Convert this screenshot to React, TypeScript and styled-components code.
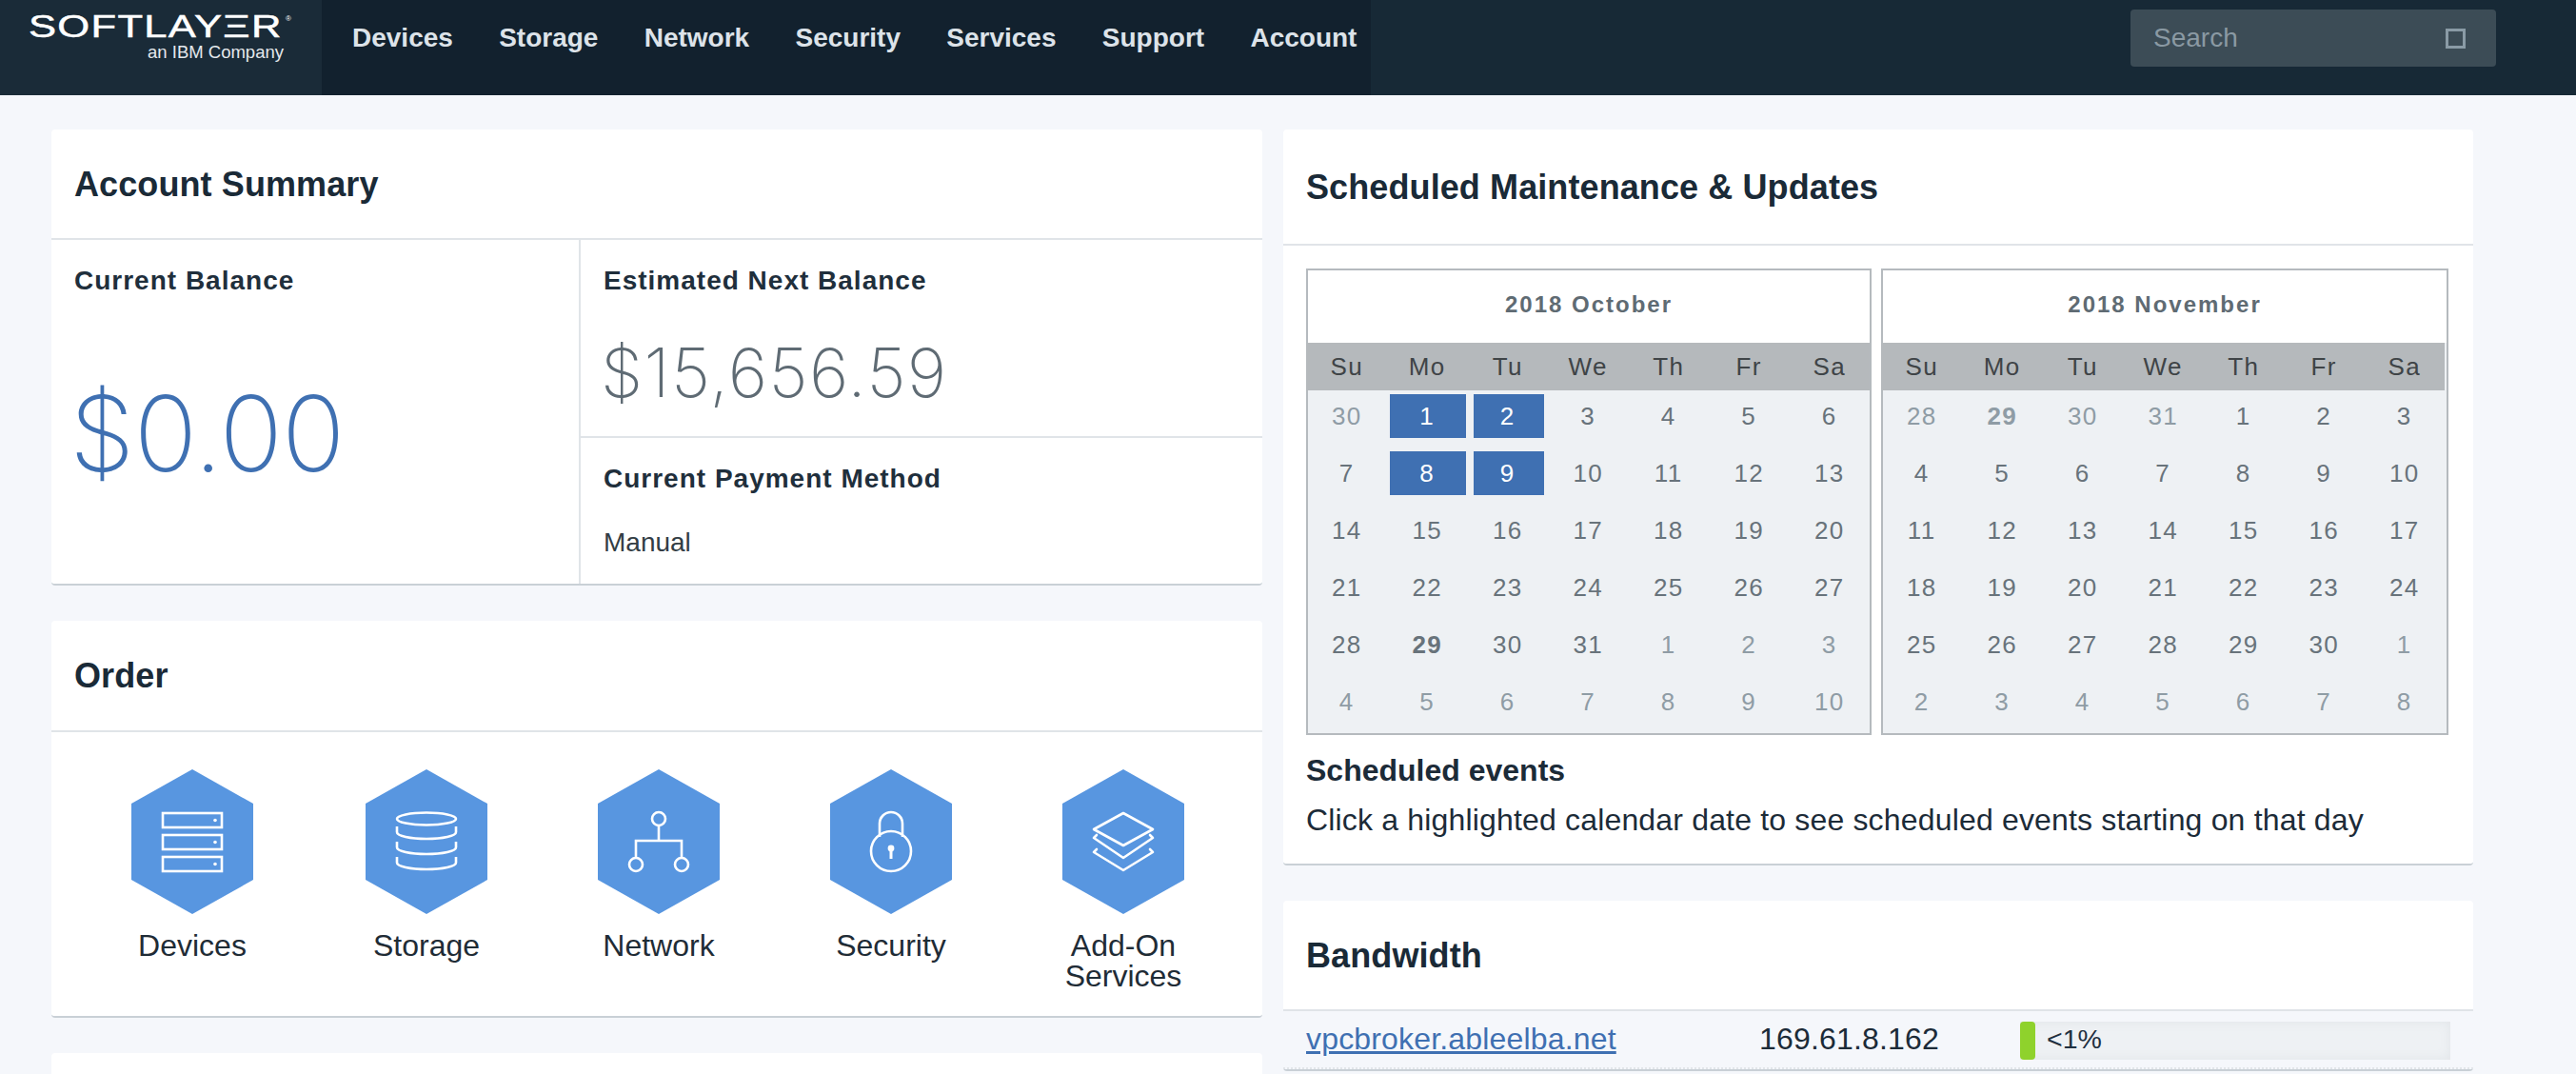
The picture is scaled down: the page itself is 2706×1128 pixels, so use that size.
import React from 'react'
import styled, { createGlobalStyle } from 'styled-components'

const Global = createGlobalStyle`
  html, body { margin: 0; padding: 0; height: 100%; background: #f5f7fb; overflow: hidden; }
  body { font-family: "Liberation Sans", Arial, sans-serif; color: #1c2b38; }
  * { box-sizing: border-box; }
`

const Page = styled.div`
  width: 2706px;
  height: 1128px;
  overflow: hidden;
`

const Header = styled.header`
  display: flex;
  height: 100px;
  background: #172936;
`

const Logo = styled.div`
  width: 338px;
  padding: 11px 0 0 30px;
  background: #1a2b38;
  color: #fff;
`

const LogoMark = styled.div`
  position: relative;
  width: 276px;
  height: 34px;
  font-size: 33.5px;
  line-height: 34px;
  white-space: nowrap;
  -webkit-text-stroke: 0.5px #fff;

  span {
    display: inline-block;
    letter-spacing: 1px;
    transform: scaleX(1.3);
    transform-origin: left center;
  }

  sup {
    position: absolute;
    top: 5px;
    right: 0;
    font-size: 8px;
    line-height: 8px;
    -webkit-text-stroke: 0;
  }
`

const LogoSub = styled.div`
  width: 268px;
  font-size: 18.5px;
  line-height: 20px;
  text-align: right;
  color: #e4e8ec;
`

const Nav = styled.nav`
  display: flex;
  gap: 48.3px;
  width: 1102px;
  padding: 24px 0 0 32px;
  background: #12212e;
`

const NavLink = styled.a`
  font-size: 28px;
  font-weight: 700;
  line-height: 32px;
  color: #dde3e9;
`

const Search = styled.div`
  display: flex;
  align-items: center;
  justify-content: space-between;
  width: 384px;
  height: 60px;
  margin: 10px 0 0 798px;
  padding: 0 32px 0 24px;
  border-radius: 4px;
  background: #3c4c56;
  font-size: 28px;
  color: #8a99a3;
`

const SearchIcon = styled.span`
  width: 21px;
  height: 21px;
  border: 3px solid #8a9ba6;
`

const Main = styled.main`
  display: grid;
  grid-template-columns: 1272px 1250px;
  gap: 22px;
  padding: 36px 0 0 54px;
`

const Column = styled.div`
  display: flex;
  flex-direction: column;
  gap: 37px;
`

const Card = styled.section`
  background: #fff;
  border-radius: 4px;
  border-bottom: 2px solid #c9d0d6;
`

const CardHead = styled.div<{ $height: number; $lift?: number }>`
  display: flex;
  align-items: center;
  height: ${(p) => p.$height + 2}px;
  padding: ${(p) => 2 - (p.$lift || 0)}px 24px 0;
  border-bottom: 2px solid #e0e4e8;
`

const Title = styled.h2`
  margin: 0;
  font-size: 36px;
  line-height: 40px;
  font-weight: 700;
  letter-spacing: 0.1px;
  color: #1a2a37;
`

const Summary = styled.div`
  display: grid;
  grid-template-columns: 556px 1fr;
`

const Balance = styled.div`
  padding: 27px 24px 0;
  border-right: 2px solid #e0e4e8;
`

const Cell = styled.div<{ $height: number; $line?: boolean }>`
  height: ${(p) => p.$height}px;
  padding: 27px 24px 0;
  border-bottom: ${(p) => (p.$line ? '2px solid #e0e4e8' : '0')};
`

const Label = styled.div`
  font-size: 28px;
  line-height: 32px;
  font-weight: 700;
  letter-spacing: 1px;
  color: #1f2f3c;
`

const BigAmount = styled.div`
  margin: 88px 0 0 -5px;
  font-family: Inter, "Liberation Sans", sans-serif;
  font-weight: 200;
  font-size: 110px;
  line-height: 112px;
  letter-spacing: -0.75px;
  color: #3f70b2;
`

const Amount = styled.div`
  margin: 44px 0 0 -3px;
  font-family: Inter, "Liberation Sans", sans-serif;
  font-weight: 200;
  font-size: 71px;
  line-height: 72px;
  letter-spacing: 1.4px;
  color: #5f6b74;
`

const Method = styled.div`
  margin-top: 35px;
  font-size: 28px;
  line-height: 32px;
  color: #333d45;
`

const OrderGrid = styled.div`
  display: grid;
  grid-template-columns: 248px repeat(4, 244px);
  padding: 39px 0 26px 24px;
`

const OrderItem = styled.a`
  display: flex;
  flex-direction: column;
  align-items: center;
  font-size: 32px;
  line-height: 32px;
  text-align: center;
  color: #1f2c36;

  svg { display: block; margin-bottom: 17px; }
`

const Stub = styled(Card)`
  height: 200px;
`

const Calendars = styled.div`
  display: grid;
  grid-template-columns: 594px 596px;
  gap: 10px;
  padding: 24px 0 0 24px;
`

const Calendar = styled.div`
  height: 490px;
  border: 2px solid #b5babe;
  background: #eef1f4;
`

const Month = styled.div`
  height: 76px;
  background: #fff;
  text-align: center;
  font-size: 24px;
  line-height: 72px;
  font-weight: 700;
  letter-spacing: 2px;
  color: #5f6b73;
`

const Weekdays = styled.div<{ $inset?: boolean }>`
  height: 50px;
  margin: 0 ${(p) => (p.$inset ? '2px' : '0')} 0 -2px;
  background: #b5b9bc;
  overflow: hidden;
`

const Week = styled.div`
  display: grid;
  grid-template-columns: repeat(7, 84.5px);
  margin-left: 0.5px;
  font-size: 26px;
  line-height: 50px;
  letter-spacing: 1.4px;
  text-align: center;
  color: #3f4447;
`

const Days = styled.div`
  display: grid;
  grid-template-columns: repeat(7, 84.5px);
  grid-auto-rows: 46px;
  row-gap: 14px;
  margin-left: -1.5px;
  padding-top: 4px;
`

const Day = styled.div<{ $muted?: boolean; $bold?: boolean }>`
  font-size: 26px;
  line-height: 46px;
  letter-spacing: 1.4px;
  text-align: center;
  font-weight: ${(p) => (p.$bold ? 700 : 400)};
  color: ${(p) => (p.$muted ? '#8f9ca5' : '#68737b')};
`

const Picked = styled(Day)<{ $second?: boolean }>`
  margin: ${(p) => (p.$second ? '0 4px 0 6.5px' : '0 1.5px 0 3px')};
  padding-right: ${(p) => (p.$second ? '2.5px' : '1.5px')};
  background: #3f70b2;
  color: #fff;
`

const Events = styled.div`
  padding: 21px 24px 30px;
  font-size: 32px;
  line-height: 32px;
  letter-spacing: 0.17px;
  color: #1c2b38;

  strong { display: block; margin-bottom: 20px; letter-spacing: 0; }
`

const BandRow = styled.div`
  display: grid;
  grid-template-columns: 476px 274px 452px;
  align-items: center;
  height: 61px;
  padding: 0 24px;
  background: #f5f7fb;
  border-bottom: 2px dotted #e2e5e9;
  font-size: 32px;
  letter-spacing: 0.17px;
`

const HostLink = styled.a`
  color: #3f70b2;
  text-decoration: underline;
`

const Meter = styled.div`
  display: flex;
  align-items: center;
  height: 40px;
  margin-top: 3px;
  background: #eef1f4;
  box-shadow: inset 0 0 12px rgba(120, 130, 140, 0.1);
  font-size: 28.5px;
  letter-spacing: 0;
  color: #1f3040;
`

const MeterFill = styled.span`
  width: 16px;
  height: 40px;
  margin-right: 12px;
  border-radius: 4px;
  background: #8fd22c;
`

const MeterText = styled.span`
  margin-top: -3px;
`

const Hex = ({ children }: { children: React.ReactNode }) => (
  <svg width="128" height="152" viewBox="0 0 128 152" fill="none" stroke="#fff" strokeWidth="2.6">
    <polygon points="64,0 128,36 128,116 64,152 0,116 0,36" fill="#5896e0" stroke="none" />
    {children}
  </svg>
)

const DevicesIcon = () => (
  <Hex>
    {[46, 69, 92].map((y) => (
      <g key={y}>
        <rect x="33" y={y} width="62" height="15" />
        <circle cx="88" cy={y + 7.5} r="1.8" fill="#fff" stroke="none" />
      </g>
    ))}
  </Hex>
)

const StorageIcon = () => (
  <Hex>
    <ellipse cx="64" cy="52" rx="31" ry="6.5" />
    {[60, 76, 92].map((y) => (
      <path key={y} d={`M33 ${y}v6c0 4 14 7 31 7s31-3 31-7v-6`} />
    ))}
  </Hex>
)

const NetworkIcon = () => (
  <Hex>
    <circle cx="64" cy="52" r="7" />
    <path d="M64 59V75M40 93V75H88V93" />
    <circle cx="40" cy="100" r="7" />
    <circle cx="88" cy="100" r="7" />
  </Hex>
)

const LockIcon = () => (
  <Hex>
    <path d="M52 71V57a12 12 0 0 1 24 0V71" />
    <circle cx="64" cy="86" r="21" />
    <circle cx="64" cy="83" r="3.4" fill="#fff" stroke="none" />
    <path d="M64 84V94" strokeWidth="3" />
  </Hex>
)

const LayersIcon = () => (
  <Hex>
    <g strokeLinejoin="round" strokeLinecap="round">
      <path d="M64 46L95 63L64 80L33 63Z" />
      <path d="M36 69L33 72L64 93L95 72L92 69" />
      <path d="M36 84L33 87L64 106L95 87L92 84" />
    </g>
  </Hex>
)

type DayCell = { n: number; muted?: boolean; bold?: boolean; picked?: boolean; second?: boolean }

const dim = (list: number[]): DayCell[] => list.map((n) => ({ n, muted: true }))
const plain = (from: number, to: number): DayCell[] =>
  Array.from({ length: to - from + 1 }, (_, i) => ({ n: from + i }))

const october: DayCell[] = [
  ...dim([30]),
  { n: 1, picked: true },
  { n: 2, picked: true, second: true },
  ...plain(3, 7),
  { n: 8, picked: true },
  { n: 9, picked: true, second: true },
  ...plain(10, 28),
  { n: 29, bold: true },
  ...plain(30, 31),
  ...dim([1, 2, 3, 4, 5, 6, 7, 8, 9, 10]),
]

const november: DayCell[] = [
  ...dim([28]),
  { n: 29, muted: true, bold: true },
  ...dim([30, 31]),
  ...plain(1, 30),
  ...dim([1, 2, 3, 4, 5, 6, 7, 8]),
]

const weekdays = ['Su', 'Mo', 'Tu', 'We', 'Th', 'Fr', 'Sa']

const MonthView = ({ title, days, inset }: { title: string; days: DayCell[]; inset?: boolean }) => (
  <Calendar>
    <Month>{title}</Month>
    <Weekdays $inset={inset}>
      <Week>
        {weekdays.map((d) => (
          <span key={d}>{d}</span>
        ))}
      </Week>
    </Weekdays>
    <Days>
      {days.map((d, i) =>
        d.picked ? (
          <Picked key={i} $second={d.second}>
            {d.n}
          </Picked>
        ) : (
          <Day key={i} $muted={d.muted} $bold={d.bold}>
            {d.n}
          </Day>
        ),
      )}
    </Days>
  </Calendar>
)

const navItems = ['Devices', 'Storage', 'Network', 'Security', 'Services', 'Support', 'Account']

export default function App() {
  return (
    <Page>
      <Global />
      <Header>
        <Logo>
          <LogoMark aria-label="SoftLayer">
            <span>SOFTLAYΞR</span>
            <sup>®</sup>
          </LogoMark>
          <LogoSub>an IBM Company</LogoSub>
        </Logo>
        <Nav>
          {navItems.map((n) => (
            <NavLink key={n}>{n}</NavLink>
          ))}
        </Nav>
        <Search>
          Search
          <SearchIcon />
        </Search>
      </Header>
      <Main>
        <Column>
          <Card>
            <CardHead $height={114}>
              <Title>Account Summary</Title>
            </CardHead>
            <Summary>
              <Balance>
                <Label>Current Balance</Label>
                <BigAmount>$0.00</BigAmount>
              </Balance>
              <div>
                <Cell $height={208} $line>
                  <Label>Estimated Next Balance</Label>
                  <Amount>$15,656.59</Amount>
                </Cell>
                <Cell $height={153}>
                  <Label>Current Payment Method</Label>
                  <Method>Manual</Method>
                </Cell>
              </div>
            </Summary>
          </Card>
          <Card>
            <CardHead $height={115} $lift={2}>
              <Title>Order</Title>
            </CardHead>
            <OrderGrid>
              <OrderItem>
                <DevicesIcon />
                Devices
              </OrderItem>
              <OrderItem>
                <StorageIcon />
                Storage
              </OrderItem>
              <OrderItem>
                <NetworkIcon />
                Network
              </OrderItem>
              <OrderItem>
                <LockIcon />
                Security
              </OrderItem>
              <OrderItem>
                <LayersIcon />
                Add-On
                <br />
                Services
              </OrderItem>
            </OrderGrid>
          </Card>
          <Stub />
        </Column>
        <Column>
          <Card>
            <CardHead $height={120}>
              <Title>Scheduled Maintenance &amp; Updates</Title>
            </CardHead>
            <Calendars>
              <MonthView title="2018 October" days={october} />
              <MonthView title="2018 November" days={november} inset />
            </Calendars>
            <Events>
              <strong>Scheduled events</strong>
              Click a highlighted calendar date to see scheduled events starting on that day
            </Events>
          </Card>
          <Card>
            <CardHead $height={114}>
              <Title>Bandwidth</Title>
            </CardHead>
            <BandRow>
              <HostLink>vpcbroker.ableelba.net</HostLink>
              <span>169.61.8.162</span>
              <Meter>
                <MeterFill />
                <MeterText>&lt;1%</MeterText>
              </Meter>
            </BandRow>
          </Card>
        </Column>
      </Main>
    </Page>
  )
}
